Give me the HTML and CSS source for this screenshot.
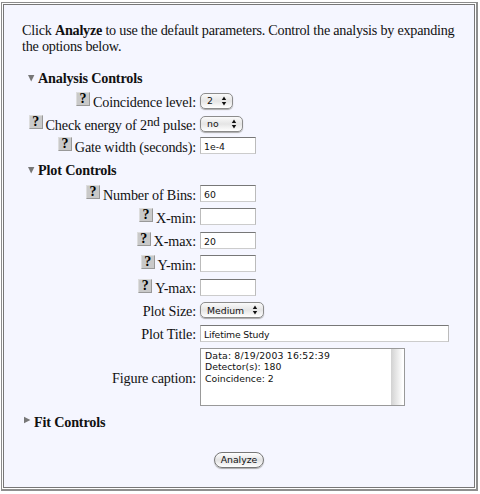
FILE: index.html
```html
<!DOCTYPE html>
<html lang="en">
<head>
<meta charset="utf-8">
<title>Analysis Controls</title>
<link rel="stylesheet" href="styles.css">
</head>
<body>
<form class="frame">
<div class="panel">
  <p class="intro"><span class="line">Click <b>Analyze</b> to use the default parameters. Control the analysis by expanding</span><span class="line">the options below.</span></p>
  <h2 class="heading h-analysis"><svg class="tri" viewBox="0 0 8 8"><path d="M1 1h6.4L4.2 7.4z"/></svg><span>Analysis Controls</span></h2>
  <div class="row r1"><div class="label"><span class="help">?</span><span class="txt">Coincidence level:</span></div><div class="select s1"><span>2</span><svg class="arrows" viewBox="0 0 6 10"><path d="M3 0.5L5.2 4H.8zM3 9.5L5.2 6H.8z"/></svg></div></div>
  <div class="row r2"><div class="label"><span class="help">?</span><span class="txt">Check energy of 2<sup>nd</sup> pulse:</span></div><div class="select s2"><span>no</span><svg class="arrows" viewBox="0 0 6 10"><path d="M3 0.5L5.2 4H.8zM3 9.5L5.2 6H.8z"/></svg></div></div>
  <div class="row r3"><div class="label"><span class="help">?</span><span class="txt">Gate width (seconds):</span></div><input class="field" value="1e-4"></div>
  <h2 class="heading h-plot"><svg class="tri" viewBox="0 0 8 8"><path d="M1 1h6.4L4.2 7.4z"/></svg><span>Plot Controls</span></h2>
  <div class="row r4"><div class="label"><span class="help">?</span><span class="txt">Number of Bins:</span></div><input class="field" value="60"></div>
  <div class="row r4"><div class="label"><span class="help">?</span><span class="txt">X-min:</span></div><input class="field"></div>
  <div class="row r4"><div class="label"><span class="help">?</span><span class="txt">X-max:</span></div><input class="field" value="20"></div>
  <div class="row r4"><div class="label"><span class="help">?</span><span class="txt">Y-min:</span></div><input class="field"></div>
  <div class="row r4"><div class="label"><span class="help">?</span><span class="txt">Y-max:</span></div><input class="field"></div>
  <div class="row r5"><div class="label"><span class="txt">Plot Size:</span></div><div class="select s3"><span>Medium</span><svg class="arrows" viewBox="0 0 6 10"><path d="M3 0.5L5.2 4H.8zM3 9.5L5.2 6H.8z"/></svg></div></div>
  <div class="row r6"><div class="label"><span class="txt">Plot Title:</span></div><input class="field wide" value="Lifetime Study"></div>
  <div class="row r7"><div class="label"><span class="txt">Figure caption:</span></div><div class="area"><div class="caption"><span class="stamp">Data: 8/19/2003 16:52:39</span><br>Detector(s): 180<br>Coincidence: 2</div><div class="track"></div></div></div>
  <h2 class="heading h-fit"><svg class="tri" viewBox="0 0 8 8"><path d="M1 .8v6.4L7.4 4z"/></svg><span>Fit Controls</span></h2>
  <div class="actions"><button class="analyze" type="button">Analyze</button></div>
</div>
</form>
</body>
</html>
```
FILE: styles.css
```css
* { box-sizing: border-box; }
body { margin: 0; background: #fff; font: 14.2px/16px "Liberation Serif", serif; letter-spacing: -0.16px; color: #111; }
.frame { margin: 2px 0 0 1px; width: 477px; height: 489px; border: 1px solid #8c8c8c; border-right: 2px solid #8e8e8e; border-bottom: 2px solid #8e8e8e; padding: 1px; background: #fff; }
.panel { height: 100%; border: 1px solid #777; background: #f5f6ff; padding: 17px 0 0 18px; }
.intro { margin: 0; letter-spacing: -0.235px; }
.line { display: block; white-space: nowrap; height: 16px; }
.heading { margin: 0; font-size: 14.2px; line-height: 16px; height: 16px; display: flex; align-items: center; white-space: nowrap; }
.h-analysis, .h-fit { letter-spacing: -0.18px; }
.tri { width: 8px; height: 8px; fill: #777; margin-right: 3px; }
.h-analysis { margin-top: 16px; padding-left: 5px; }
.h-plot { margin-top: 8px; padding-left: 5px; }
.h-fit { margin-top: 8px; padding-left: 1px; }
.h-fit .tri { margin-top: -3px; }
.row { display: grid; grid-template-columns: 174px 1fr; column-gap: 4px; height: 17px; align-items: center; }
.label { display: flex; justify-content: flex-end; align-items: center; white-space: nowrap; }
.txt { position: relative; top: 1px; }
sup { font-size: 13px; line-height: 0; vertical-align: 4px; }
.help { width: 14px; height: 14px; margin: -3px 3px 0 0; background: #c9c9c9; border: 1px solid #ddd; border-right-color: #999; border-bottom-color: #999; color: #000; font-weight: bold; font-size: 14px; line-height: 12px; text-align: center; }
.r1 { margin-top: 6px; }
.r2 { margin-top: 6px; }
.r3 { margin-top: 5px; }
.r4 { margin-top: 6.4px; }
.h-plot + .r4 { margin-top: 7px; }
.r5, .r6 { margin-top: 6px; }
.r7 { margin-top: 6px; height: 58px; }
.field, .select, .caption, .analyze { font: 9.3px/11px "DejaVu Sans", sans-serif; letter-spacing: 0; color: #111; }
.field { width: 56px; height: 17px; border: 1px solid #bbb; border-top-color: #777; border-bottom-color: #ccc; background: #fff; padding: 2px 3px 0; outline: 0; }
.wide { width: 249px; letter-spacing: -0.15px; }
.select { height: 16px; border: 1px solid #8c8c8c; border-radius: 5px; display: flex; justify-content: space-between; align-items: center; padding: 0 5px 0 6px; background: linear-gradient(#fafafa, #e5e5e5 50%, #fff); box-shadow: 0 1px 1px #aaa; }
.arrows { width: 6px; height: 10px; fill: #111; }
.s1 { width: 33px; }
.s2 { width: 43px; }
.s3 { width: 64px; }
.area { width: 205px; height: 58px; border: 1px solid #999; background: #fff; display: flex; justify-content: space-between; }
.caption { padding: 1px 0 0 4px; white-space: nowrap; line-height: 11.5px; }
.stamp { letter-spacing: 0.18px; }
.track { width: 13px; background: linear-gradient(90deg, #d2d2d2, #fff 90%); }
.actions { margin-top: 22px; padding-left: 192px; }
.analyze { display: block; width: 50px; height: 16px; border: 1px solid #777; border-radius: 9px; background: linear-gradient(#fff, #e2e2e2 50%, #fff); padding: 0; box-shadow: 0 1px 1px #aaa; }
```
